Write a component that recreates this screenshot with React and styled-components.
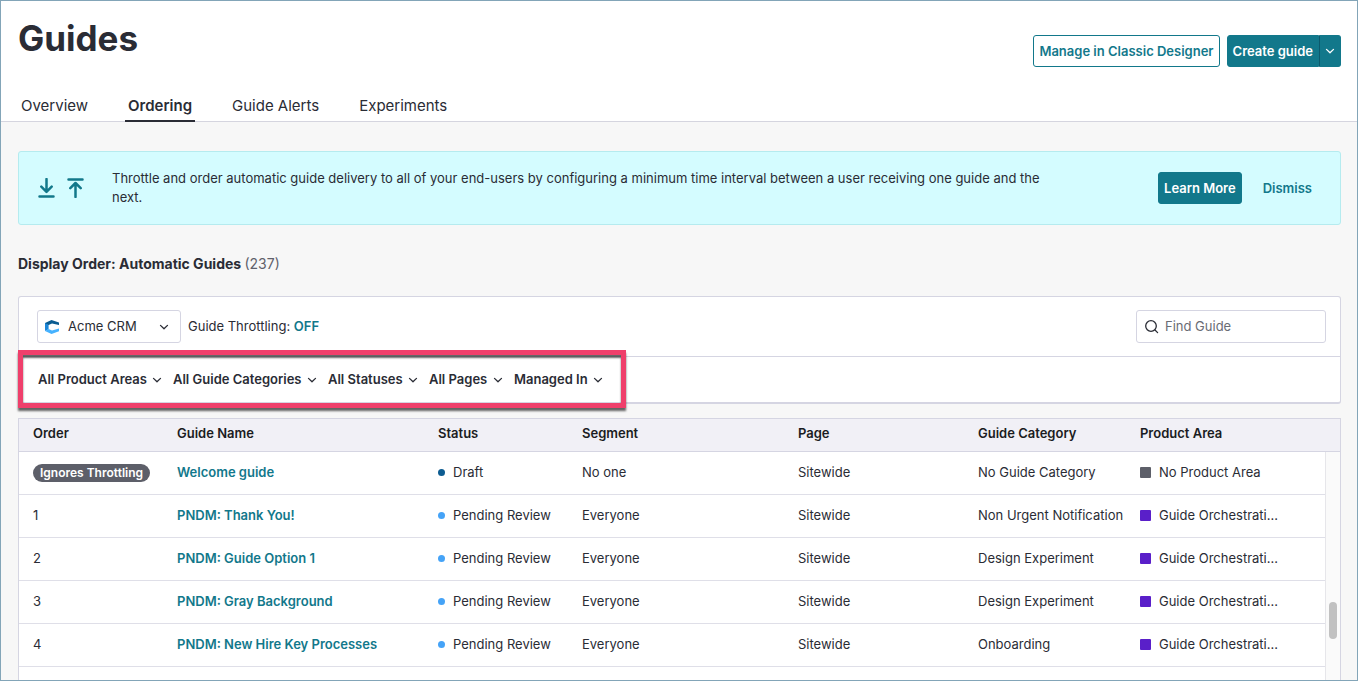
import styled, { createGlobalStyle } from "styled-components";

const guides = [
  { order: "", name: "Welcome guide", status: "Draft", segment: "No one", page: "Sitewide", category: "No Guide Category", area: "No Product Area" },
  { order: "1", name: "PNDM: Thank You!", status: "Pending Review", segment: "Everyone", page: "Sitewide", category: "Non Urgent Notification", area: "Guide Orchestrati..." },
  { order: "2", name: "PNDM: Guide Option 1", status: "Pending Review", segment: "Everyone", page: "Sitewide", category: "Design Experiment", area: "Guide Orchestrati..." },
  { order: "3", name: "PNDM: Gray Background", status: "Pending Review", segment: "Everyone", page: "Sitewide", category: "Design Experiment", area: "Guide Orchestrati..." },
  { order: "4", name: "PNDM: New Hire Key Processes", status: "Pending Review", segment: "Everyone", page: "Sitewide", category: "Onboarding", area: "Guide Orchestrati..." },
];

const columns = [
  { title: "Order", size: 144 },
  { title: "Guide Name", size: 261 },
  { title: "Status", size: 144 },
  { title: "Segment", size: 216 },
  { title: "Page", size: 180 },
  { title: "Guide Category", size: 162 },
  { title: "Product Area", size: 214 },
];
const total = columns.reduce((sum, col) => sum + col.size, 0);

const filters = ["All Product Areas", "All Guide Categories", "All Statuses", "All Pages", "Managed In"];
const tabs = ["Overview", "Ordering", "Guide Alerts", "Experiments"];

const Chevron = () => (
  <svg width="10" height="10" viewBox="0 0 10 10" fill="none" stroke="currentColor" strokeWidth="1.3" strokeLinecap="round" strokeLinejoin="round" aria-hidden="true">
    <path d="M1.5 3.4 5 6.8l3.5-3.4" />
  </svg>
);

const App = () => {
  return (
    <Page>
      <GlobalStyle />
      <Header>
        <TitleRow>
          <h1>Guides</h1>
          <Actions>
            <Button $outline>Manage in Classic Designer</Button>
            <SplitButton>
              <Button>Create guide</Button>
              <Button aria-label="More create options"><Chevron /></Button>
            </SplitButton>
          </Actions>
        </TitleRow>
        <Tabs>
          {tabs.map((tab) => (
            <Tab key={tab} href="#" $active={tab === "Ordering"}>{tab}</Tab>
          ))}
        </Tabs>
      </Header>

      <Content>
        <Banner>
          <BannerIcons>
            <svg width="18" height="20" viewBox="0 0 18 20" aria-hidden="true">
              <path d="M9.5 1v12M4.3 8.6l5.2 5.2 5.2-5.2M2.5 18.5h14" />
            </svg>
            <svg width="18" height="20" viewBox="0 0 18 20" aria-hidden="true">
              <path d="M9.5 19V6M4.3 10.2 9.5 5l5.2 5.2M2.5 1.5h14" />
            </svg>
          </BannerIcons>
          <p>
            Throttle and order automatic guide delivery to all of your end-users by configuring a minimum time interval between a user receiving one guide and the next.
          </p>
          <BannerActions>
            <Button>Learn More</Button>
            <TextButton>Dismiss</TextButton>
          </BannerActions>
        </Banner>

        <SectionTitle>
          Display Order: Automatic Guides <span>(237)</span>
        </SectionTitle>

        <Panel>
          <Toolbar>
            <AppSelect>
              <svg width="14" height="14" viewBox="0 0 14 14" aria-hidden="true">
                <path d="M0 3 6.5 0 14 2.6V5L7 3.6 3.6 5 0 4.6Z" fill="#0a5c91" />
                <path d="M0 3 3.6 5v4.2L0 11Z" fill="#1b86d8" />
                <path d="M0 11l3.6-2L7 10.4 14 8.6v2.6L6.5 14Z" fill="#45b2ff" />
              </svg>
              <select aria-label="Application"><option>Acme CRM</option></select>
              <Chevron />
            </AppSelect>
            <Throttling>Guide Throttling: <a href="#">OFF</a></Throttling>
            <Search>
              <svg width="14" height="14" viewBox="0 0 14 14" fill="none" stroke="currentColor" strokeWidth="1.3" strokeLinecap="round" aria-hidden="true">
                <circle cx="6" cy="6" r="5.3" />
                <path d="m10 10 2.6 2.6" />
              </svg>
              <input type="text" placeholder="Find Guide" aria-label="Find Guide" />
            </Search>
          </Toolbar>
          <FilterBar>
            <FilterGroup>
              {filters.map((filter) => (
                <Filter key={filter}>
                  <select aria-label={filter}><option>{filter}</option></select>
                  <Chevron />
                </Filter>
              ))}
              <Highlight />
            </FilterGroup>
          </FilterBar>
        </Panel>

        <TableWrap>
          <Table>
            <colgroup>
              {columns.map((col) => (
                <col key={col.title} style={{ width: `${(col.size / total) * 100}%` }} />
              ))}
            </colgroup>
            <thead>
              <tr>
                {columns.map((col) => <th key={col.title} scope="col">{col.title}</th>)}
              </tr>
            </thead>
            <tbody>
              {guides.map((guide) => (
                <tr key={guide.name}>
                  <td>{guide.order || <Pill>Ignores Throttling</Pill>}</td>
                  <td><a href="#">{guide.name}</a></td>
                  <td><Status $draft={guide.status === "Draft"}>{guide.status}</Status></td>
                  <td>{guide.segment}</td>
                  <td>{guide.page}</td>
                  <td>{guide.category}</td>
                  <td><Area $none={guide.area === "No Product Area"}>{guide.area}</Area></td>
                </tr>
              ))}
            </tbody>
          </Table>
          <ScrollTrack><ScrollThumb /></ScrollTrack>
        </TableWrap>
      </Content>
    </Page>
  );
};

export default App;

const GlobalStyle = createGlobalStyle`
  * {
    box-sizing: border-box;
  }
  body {
    margin: 0;
    background: #f7f7f7;
    color: #2a2c35;
    font-family: Inter, "Liberation Sans", sans-serif;
    font-size: 13px;
    line-height: 19px;
  }
  button, input, select {
    font: inherit;
    color: inherit;
  }
  a {
    color: #12788b;
    font-weight: 600;
    text-decoration: none;
  }
`;

const Page = styled.div`
  display: flex;
  flex-direction: column;
  height: 100vh;
  border: 1px solid #83a5b8;
  overflow: hidden;
`;

const Header = styled.header`
  background: #fff;
  border-bottom: 1px solid #d5d5df;
`;

const TitleRow = styled.div`
  display: flex;
  justify-content: space-between;
  height: 88px;
  padding: 16px 16px 0 17px;
  h1 {
    margin: 0;
    font-size: 35px;
    line-height: 42px;
    font-weight: 700;
  }
`;

const Actions = styled.div`
  display: flex;
  gap: 7px;
  margin-top: 18px;
`;

const Button = styled.button`
  height: 32px;
  padding: 0 5px;
  border: 1px solid #12788b;
  border-radius: 3px;
  background: ${({ $outline }) => ($outline ? "#fff" : "#12788b")};
  color: ${({ $outline }) => ($outline ? "#12788b" : "#fff")};
  font-weight: 600;
  white-space: nowrap;
`;

const SplitButton = styled.div`
  display: flex;
  ${Button}:first-child {
    border-radius: 3px 0 0 3px;
  }
  ${Button}:last-child {
    display: flex;
    align-items: center;
    border-left-color: #0b5a6d;
    border-radius: 0 3px 3px 0;
  }
`;

const Tabs = styled.nav`
  display: flex;
  gap: 34px;
  height: 32px;
  padding-left: 17px;
`;

const Tab = styled.a`
  height: 33px;
  padding: 7px 3px 0;
  border-bottom: 2px solid ${({ $active }) => ($active ? "#2a2c35" : "transparent")};
  color: #2a2c35;
  font-size: 15px;
  font-weight: ${({ $active }) => ($active ? 600 : 400)};
`;

const Content = styled.main`
  display: flex;
  flex-direction: column;
  flex: 1;
  min-height: 0;
  padding: 29px 16px 0 17px;
`;

const Banner = styled.section`
  display: flex;
  align-items: center;
  flex-shrink: 0;
  height: 74px;
  padding: 0 18px;
  background: #d4fcff;
  border: 1px solid #b5ebef;
  border-radius: 3px;
  p {
    flex: 1;
    max-width: 940px;
    margin: 0;
  }
`;

const BannerIcons = styled.div`
  display: flex;
  gap: 11px;
  width: 75px;
  svg {
    fill: none;
    stroke: #12788b;
    stroke-width: 2.5;
    stroke-linecap: round;
    stroke-linejoin: round;
  }
`;

const BannerActions = styled.div`
  display: flex;
  gap: 11px;
  margin-left: auto;
`;

const TextButton = styled.button`
  padding: 0 10px;
  border: 0;
  background: none;
  color: #12788b;
  font-weight: 600;
`;

const SectionTitle = styled.h2`
  margin: 29px 0 22px;
  font-size: 14px;
  line-height: 20px;
  font-weight: 700;
  span {
    font-weight: 400;
    color: #5f616b;
  }
`;

const Panel = styled.section`
  flex-shrink: 0;
  background: #fff;
  border: 1px solid #d5d5e2;
  border-bottom-width: 2px;
  border-radius: 3px;
`;

const Toolbar = styled.div`
  display: flex;
  align-items: center;
  gap: 7px;
  height: 60px;
  padding: 0 14px 0 18px;
  border-bottom: 1px solid #d5d5e2;
`;

const AppSelect = styled.div`
  display: grid;
  grid-template-columns: 30px 1fr 21px;
  align-items: center;
  width: 144px;
  height: 33px;
  border: 1px solid #d5d5e2;
  border-radius: 3px;
  svg {
    grid-row: 1;
    pointer-events: none;
  }
  svg:first-child {
    grid-column: 1;
    margin-left: 7px;
  }
  svg:last-child {
    grid-column: 3;
  }
  select {
    grid-row: 1;
    grid-column: 1 / -1;
    height: 31px;
    padding: 0 0 0 30px;
    border: 0;
    background: none;
    appearance: none;
  }
`;

const Throttling = styled.span`
  white-space: nowrap;
`;

const Search = styled.label`
  display: flex;
  align-items: center;
  gap: 6px;
  width: 190px;
  height: 33px;
  margin-left: auto;
  padding: 0 8px;
  border: 1px solid #d5d5e2;
  border-radius: 3px;
  input {
    flex: 1;
    min-width: 0;
    padding: 0;
    border: 0;
    outline: 0;
    background: none;
  }
  input::placeholder {
    color: #6a6c75;
  }
`;

const FilterBar = styled.div`
  display: flex;
  height: 45px;
`;

const FilterGroup = styled.div`
  position: relative;
  display: flex;
  align-items: center;
  gap: 11px;
  padding: 0 23px 0 19px;
`;

const Filter = styled.div`
  display: grid;
  align-items: center;
  select {
    grid-area: 1 / 1;
    padding: 0 15px 0 0;
    border: 0;
    background: none;
    font-weight: 600;
    appearance: none;
  }
  svg {
    grid-area: 1 / 1;
    justify-self: end;
    pointer-events: none;
  }
`;

const Highlight = styled.div`
  position: absolute;
  inset: -7px 0 -6px -1px;
  border: 5px solid #ef3f6b;
  box-shadow: 0 3px 2px rgba(0, 0, 0, 0.6), inset 0 3px 2px rgba(0, 0, 0, 0.6);
  pointer-events: none;
`;

const TableWrap = styled.section`
  position: relative;
  flex: 1;
  min-height: 0;
  margin-top: 14px;
  background: #fff;
  border: 1px solid #d5d5e2;
  border-bottom: 0;
  overflow: hidden;
`;

const Table = styled.table`
  width: 100%;
  table-layout: fixed;
  border-collapse: separate;
  border-spacing: 0;
  th, td {
    height: 43px;
    padding: 0 0 2px 14px;
    border-bottom: 1px solid #dfdfe8;
    text-align: left;
    white-space: nowrap;
  }
  th {
    height: 33px;
    padding-bottom: 3px;
    background: #f1f0f6;
    border-color: #d5d5e2;
    color: #1b1c22;
    font-weight: 600;
  }
`;

const Pill = styled.span`
  display: inline-block;
  padding: 0 7px;
  border-radius: 9px;
  background: #5d5f69;
  color: #fff;
  font-size: 12px;
  line-height: 18px;
  font-weight: 600;
`;

const Status = styled.span`
  display: flex;
  align-items: center;
  gap: 8px;
  &::before {
    content: "";
    width: 7px;
    height: 7px;
    border-radius: 50%;
    background: ${({ $draft }) => ($draft ? "#0d5c91" : "#45a3f7")};
  }
`;

const Area = styled.span`
  display: flex;
  align-items: center;
  gap: 8px;
  &::before {
    content: "";
    width: 11px;
    height: 11px;
    border-radius: 1px;
    background: ${({ $none }) => ($none ? "#5d5f69" : "#5a1fc9")};
  }
`;

const ScrollTrack = styled.div`
  position: absolute;
  top: 33px;
  right: 0;
  bottom: 0;
  width: 15px;
  padding: 150px 3px 0;
  background: #fafafa;
  border-left: 1px solid #e6e6ea;
`;

const ScrollThumb = styled.div`
  height: 37px;
  border-radius: 4px;
  background: #c1c1c1;
`;
